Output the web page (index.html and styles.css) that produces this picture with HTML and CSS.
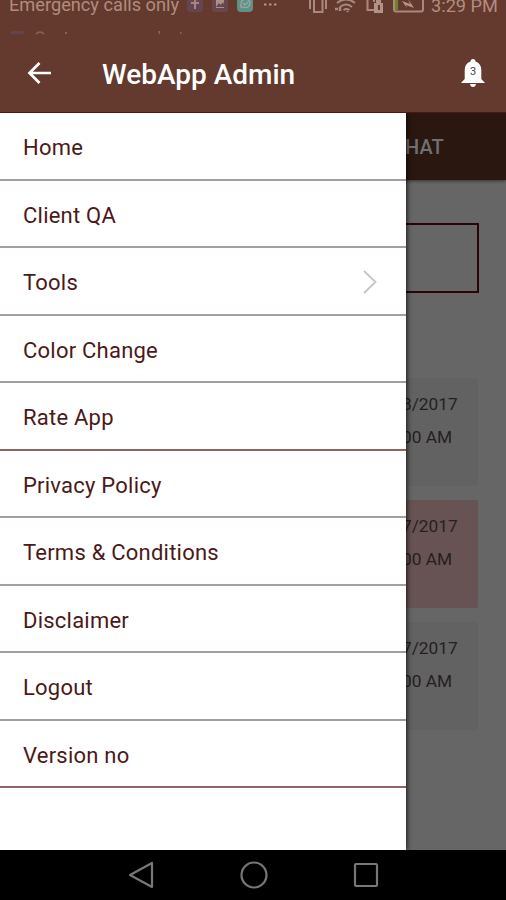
FILE: index.html
```html
<!DOCTYPE html>
<html lang="en">
<head>
<meta charset="utf-8">
<title>WebApp Admin</title>
<link rel="stylesheet" href="styles.css">
</head>
<body>
<div class="screen">
  <header class="header">
    <div class="status">
      <span class="carrier">Emergency calls only</span>
      <svg class="status-apps" width="96" height="14" viewBox="0 0 96 14">
        <rect x="0" y="-4" width="16" height="16" rx="3" fill="#654650"/>
        <path d="M8 9V1q0-3 3-3M4 3h8" stroke="#a78384" stroke-width="2" fill="none"/>
        <rect x="25" y="-4" width="16" height="16" rx="3" fill="#67474d"/>
        <path d="M29-2h8V8h-8z" fill="#ac8e8a"/><path d="M29 7l3-4 2 2 2-3 2 5z" fill="#67474d"/>
        <rect x="50" y="-4" width="16" height="16" rx="4" fill="#629087"/>
        <path d="M54 7q-1-7 4-8 5 0 5 5-2 5-7 3zM56 3l2 2 3-3" stroke="#91aba0" stroke-width="1.3" fill="none"/>
        <path d="M77 4.500h2.500M82 4.500h2.500M87 4.500h2.500" stroke="#b29488" stroke-width="2"/>
      </svg>
      <svg class="status-signals" width="118" height="14" viewBox="308 0 118 14">
        <g fill="none" stroke="#a9887d" stroke-width="2">
          <path d="M310 0v9M326 0v9M314-2v14h8.500V-2"/>
          <path d="M337 3q9-7 18 0M340 7q6-5 12 0M343.500 10q3-2 6 0"/>
          <path d="M335 9h3M340 11v-4" stroke-width="2.500"/>
          <path d="M367.500-2v12h7M374 0v2"/>
          <rect x="394" y="-5" width="29" height="16.500" rx="2"/>
        </g>
        <path d="M374 3h2V0h5v3h2v10h-9zM346 11l1.500 1.500 1.500-1.500z" fill="#b29186"/>
        <path d="M379 5v5" stroke="#633a2d" stroke-width="2"/>
        <path d="M395 0h3v10h-3z" fill="#718030"/>
        <path d="M402 1l8 3-2-5 6 9-8-3 1 3z" fill="#b8978b"/>
      </svg>
      <span class="clock">3:29 PM</span>
    </div>
    <svg class="ticker" width="200" height="4" viewBox="0 0 200 4">
      <rect x="10" y="0" width="14" height="3" rx="1" fill="#62444b"/>
      <path d="M36 3q4-4 8 0" fill="none" stroke="#8c6456" stroke-width="1.500"/>
      <path d="M65 1h2v2h-2zM158.500 0h1.500v3h-1.500zM180 1h1.500v2H180z" fill="#8c6456"/>
    </svg>
    <div class="appbar">
      <svg class="back" width="26" height="24" viewBox="0 0 26 24"><path d="M25 12H3.500M13.500 2L3.500 12l10 10" fill="none" stroke="#fff" stroke-width="2.700"/></svg>
      <h1 class="title">WebApp Admin</h1>
      <div class="alerts">
        <svg width="26" height="30" viewBox="0 0 26 30"><path d="M10.500 3.500Q10.500 1 13 1t2.500 2.500q5.800 2 5.800 8.500v9l3.700 4H1l3.700-4v-9q0-6.500 5.800-8.500zM10 26h6q-.5 3-3 3t-3-3z" fill="#fff"/></svg>
        <span class="count">3</span>
      </div>
    </div>
  </header>

  <main class="body">
    <nav class="drawer">
      <a class="item">Home</a>
      <a class="item">Client QA</a>
      <a class="item">Tools<svg width="18" height="26" viewBox="0 0 18 26"><path d="M3 1l11.500 11L3 23" fill="none" stroke="#c5c5c5" stroke-width="1.800"/></svg></a>
      <a class="item">Color Change</a>
      <a class="item item-red">Rate App</a>
      <a class="item">Privacy Policy</a>
      <a class="item">Terms &amp; Conditions</a>
      <a class="item">Disclaimer</a>
      <a class="item">Logout</a>
      <a class="item item-red">Version no</a>
    </nav>
    <section class="page">
      <div class="tab">CHAT</div>
      <div class="field"></div>
      <div class="card"><span>8/2017</span><span class="time">00 AM</span></div>
      <div class="card card-pink"><span>7/2017</span><span class="time">00 AM</span></div>
      <div class="card"><span>7/2017</span><span class="time">00 AM</span></div>
    </section>
  </main>

  <footer class="navbar">
    <svg width="28" height="28" viewBox="0 0 28 28"><path d="M25 2v24L3 14z"/></svg>
    <svg width="28" height="28" viewBox="0 0 28 28"><circle cx="14" cy="14" r="12.500"/></svg>
    <svg width="28" height="28" viewBox="0 0 28 28"><rect x="3" y="3" width="22" height="22" rx="1"/></svg>
  </footer>
</div>
</body>
</html>
```
FILE: styles.css
```css
* { box-sizing: border-box; }
body { margin: 0; font-family: Roboto, "Liberation Sans", sans-serif; background: #000; }
.screen { width: 506px; height: 900px; display: flex; flex-direction: column; overflow: hidden; }

.header { height: 113px; flex: none; background: #633a2d; border-bottom: 1px solid #4c1711; overflow: hidden; }
.status { display: flex; height: 14px; padding-left: 9px; color: #b18d80; font-size: 18.2px; line-height: 20px; white-space: nowrap; }
.carrier { width: 178px; margin-top: -5px; }
.status-apps { flex: none; }
.status-signals { margin-left: 25px; flex: none; }
.clock { margin: -4px 0 0 5px; }
.ticker { display: block; margin-top: 17px; }
.appbar { display: flex; align-items: center; height: 76px; padding: 0 20px 0 26px; }
.title { margin: 3px 0 0 50px; flex: 1; color: #fff; font-size: 28px; font-weight: 500; line-height: 32px; white-space: nowrap; }
.alerts { position: relative; width: 26px; height: 30px; }
.count { position: absolute; inset: 7px 0 auto; color: #444; font-size: 11px; line-height: 14px; text-align: center; }

.body { height: 737px; display: flex; background: #666; }
.drawer { width: 406px; flex: none; background: #fff; z-index: 1; box-shadow: 1px 0 5px rgba(0, 0, 0, 0.75); clip-path: inset(0 -12px 0 0); }
.item { display: flex; justify-content: space-between; align-items: center; height: 67.5px; padding: 4px 27px 0 23px; border-bottom: 2px solid #a69d9d; color: #4b1918; font-size: 22px; letter-spacing: 0.23px; }
.item-red { border-bottom-color: #8f6561; }

.page { flex: 1; overflow: hidden; }
.tab { height: 67px; margin-left: -14px; color: #707070; background: #291710; font-size: 20px; font-weight: 500; line-height: 69px; box-shadow: 0 1px 3px #333; }
.field { width: 88px; height: 70px; margin: 43px 0 85px -15px; border: 2px solid #290508; }
.card { display: flex; flex-direction: column; width: 76px; height: 108px; margin: 0 0 14px -4px; padding-top: 15px; background: #626262; border-radius: 2px; color: #251f1f; font-size: 17.3px; line-height: 22px; white-space: nowrap; }
.card-pink { background: #685354; }
.time { margin-top: 11px; }

.navbar { display: flex; justify-content: center; gap: 84.500px; height: 50px; padding: 11px 0 0 1px; background: #000; }
.navbar svg { fill: none; stroke: #777; stroke-width: 2.200; stroke-linejoin: round; }
```
